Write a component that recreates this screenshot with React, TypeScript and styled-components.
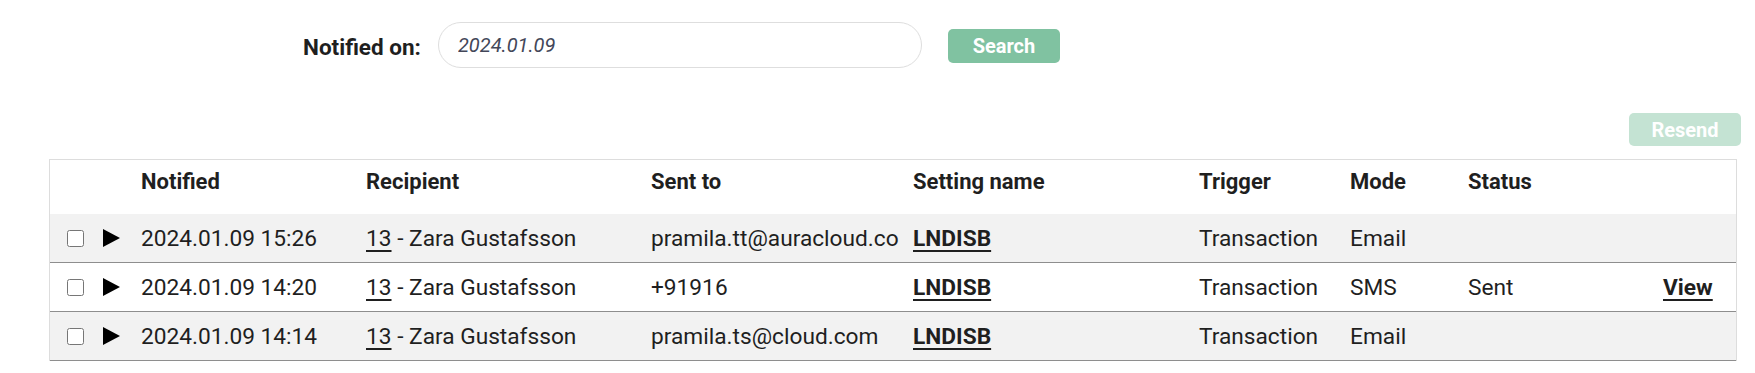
import styled, { createGlobalStyle } from "styled-components";

const GlobalStyle = createGlobalStyle`
  body {
    margin: 0;
    background: #fff;
    font-family: Roboto, "Liberation Sans", sans-serif;
    color: #1f1f1f;
  }
`;

const Page = styled.div`
  width: 1692px;
  padding-left: 49px;
`;

const SearchBar = styled.form`
  display: flex;
  align-items: center;
  padding: 22px 0 0 254px;
  height: 46px;
`;

const Label = styled.label`
  font-size: 22.5px;
  font-weight: 700;
  margin-right: 17px;
  padding-top: 4px;
`;

const DateInput = styled.input`
  box-sizing: border-box;
  width: 484px;
  height: 46px;
  border: 1px solid #dedede;
  border-radius: 23px;
  padding: 0 19px;
  font-family: inherit;
  font-size: 20px;
  font-style: italic;
  color: #434759;
  outline: none;
`;

const Button = styled.button<{ $muted?: boolean }>`
  width: 112px;
  height: ${(p) => (p.$muted ? "33px" : "34px")};
  border: none;
  border-radius: 5px;
  background: ${(p) => (p.$muted ? "#c4e3d3" : "#80c2a1")};
  color: #fff;
  font-family: inherit;
  font-size: 20px;
  font-weight: 700;
  padding: 0;
`;

const SearchButton = styled(Button)`
  margin-left: 26px;
  margin-top: 2px;
`;

const Actions = styled.div`
  display: flex;
  justify-content: flex-end;
  margin-top: 45px;
  margin-bottom: 13px;
`;

const Table = styled.div`
  width: 1688px;
  box-sizing: border-box;
  border: 1px solid #dddddd;
  border-bottom: none;
`;

const columns = "36px 38px 225px 285px 262px 286px 151px 118px 195px 1fr";

const HeaderRow = styled.div`
  display: grid;
  grid-template-columns: ${columns};
  padding-left: 17px;
  height: 54px;
  box-sizing: border-box;
  padding-top: 9px;
  font-size: 22px;
  font-weight: 700;
  line-height: 26px;
`;

const BodyRow = styled.div<{ $shaded: boolean }>`
  display: grid;
  grid-template-columns: ${columns};
  align-items: center;
  padding-left: 17px;
  height: 49px;
  box-sizing: border-box;
  border-bottom: 1px solid #8e8e8e;
  background: ${(p) => (p.$shaded ? "#f2f2f2" : "#ffffff")};
  font-size: 22.7px;
`;

const Cell = styled.div`
  white-space: nowrap;
`;

const Check = styled.input`
  width: 17px;
  height: 17px;
  margin: 0;
  display: block;
`;

const Expand = styled.svg`
  display: block;
  width: 17px;
  height: 18px;
`;

const Link = styled.a<{ $bold?: boolean }>`
  color: inherit;
  font-weight: ${(p) => (p.$bold ? 700 : 400)};
  text-decoration: underline;
  text-decoration-thickness: 2px;
  text-underline-offset: 4px;
`;

const rows = [
  { time: "2024.01.09 15:26", to: "pramila.tt@auracloud.co", mode: "Email", status: "", view: false },
  { time: "2024.01.09 14:20", to: "+91916", mode: "SMS", status: "Sent", view: true },
  { time: "2024.01.09 14:14", to: "pramila.ts@cloud.com", mode: "Email", status: "", view: false },
];

const App = () => {
  return (
    <>
      <GlobalStyle />
      <Page>
        <SearchBar onSubmit={(e) => e.preventDefault()}>
          <Label htmlFor="notified">Notified on:</Label>
          <DateInput id="notified" defaultValue="2024.01.09" />
          <SearchButton type="submit">Search</SearchButton>
        </SearchBar>
        <Actions>
          <Button $muted disabled>
            Resend
          </Button>
        </Actions>
        <Table>
          <HeaderRow>
            <Cell />
            <Cell />
            <Cell>Notified</Cell>
            <Cell>Recipient</Cell>
            <Cell>Sent to</Cell>
            <Cell>Setting name</Cell>
            <Cell>Trigger</Cell>
            <Cell>Mode</Cell>
            <Cell>Status</Cell>
            <Cell />
          </HeaderRow>
          {rows.map((row, i) => (
            <BodyRow key={row.time} $shaded={i % 2 === 0}>
              <Cell>
                <Check type="checkbox" />
              </Cell>
              <Cell>
                <Expand viewBox="0 0 17 18">
                  <polygon points="0,0 17,9 0,18" fill="#000" />
                </Expand>
              </Cell>
              <Cell>{row.time}</Cell>
              <Cell>
                <Link href="#">13</Link> - Zara Gustafsson
              </Cell>
              <Cell>{row.to}</Cell>
              <Cell>
                <Link href="#" $bold>
                  LNDISB
                </Link>
              </Cell>
              <Cell>Transaction</Cell>
              <Cell>{row.mode}</Cell>
              <Cell>{row.status}</Cell>
              <Cell>
                {row.view && (
                  <Link href="#" $bold>
                    View
                  </Link>
                )}
              </Cell>
            </BodyRow>
          ))}
        </Table>
      </Page>
    </>
  );
};

export default App;
